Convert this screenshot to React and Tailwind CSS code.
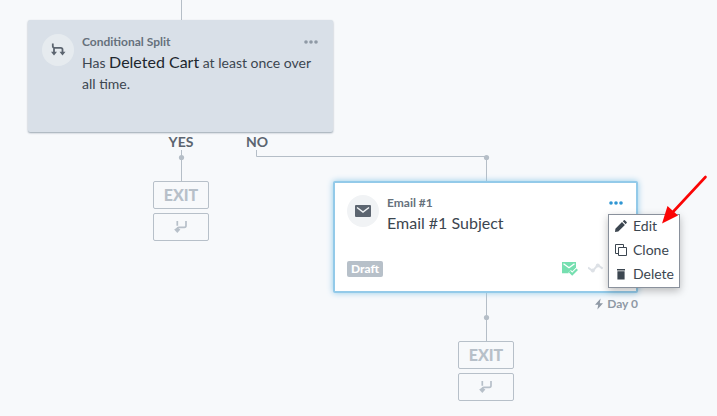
import { clsx } from 'clsx';

// Arrows used by the split card and the exit buttons
function SplitIcon() {
  return (
    <svg className="h-4 w-4" viewBox="0 0 16 16" fill="none" stroke="currentColor" strokeWidth="1.8">
      <path d="M2.8 1.5V4.2Q2.8 5.8 4.5 5.8H10.8Q12.5 5.8 12.5 7.5V12M4 5.8V12" />
      <path d="M1 9.8H7L4 13.6ZM9.5 9.8H15.5L12.5 13.6Z" fill="currentColor" stroke="none" />
    </svg>
  );
}

function MergeIcon() {
  return (
    <svg className="h-4 w-4" viewBox="0 0 16 16" fill="none" stroke="currentColor" strokeWidth="1.7">
      <path d="M4.3 2V6.8M13 2V6.5Q13 8.3 11.4 8.3H6Q4.3 8.3 4.3 10V12" />
      <path d="M1.2 10.6L4.3 8.6L7.4 10.6L4.3 14Z" fill="currentColor" stroke="none" />
    </svg>
  );
}

function MailIcon() {
  return (
    <svg className="h-3 w-4" viewBox="0 0 16 12">
      <rect width="16" height="12" rx="1" fill="#5c6570" />
      <path d="M2 2.5L8 7L14 2.5" fill="none" stroke="#f1f3f5" strokeWidth="1.5" />
    </svg>
  );
}

function MailCheckIcon() {
  return (
    <svg className="h-4 w-4" viewBox="0 0 16 16">
      <path d="M0 1H14V9.2L10 12.3H0Z" fill="#76dfb0" />
      <path d="M1.5 2.8L7 6.8L12.5 2.8" fill="none" stroke="#fff" strokeWidth="1.3" />
      <path d="M7.5 10.5L10.2 13.2L15.2 8.2" fill="none" stroke="#fff" strokeWidth="4" />
      <path d="M7.5 10.5L10.2 13.2L15.2 8.2" fill="none" stroke="#76dfb0" strokeWidth="2.2" />
    </svg>
  );
}

function TrendIcon() {
  return (
    <svg className="h-4 w-4" viewBox="0 0 16 16" fill="#dde1e6">
      <path d="M0 6.5L4.8 10L9.8 4L14.6 7.6" fill="none" stroke="#dde1e6" strokeWidth="2" />
      <circle cx="4.8" cy="9.6" r="2" />
      <circle cx="9.8" cy="4.4" r="2" />
    </svg>
  );
}

function BoltIcon() {
  return (
    <svg className="h-3 w-2" viewBox="0 0 8 12" fill="currentColor">
      <path d="M5.6 .5L0 6.8H3.2L2.4 11.5L8 5.2H4.8Z" />
    </svg>
  );
}

function PencilIcon() {
  return (
    <svg className="h-3 w-3" viewBox="0 0 12 12" fill="currentColor">
      <path d="M0 12L.4 8.7L7 2.1L9.9 5L3.3 11.6ZM7.8 1.3L8.9 .3Q9.5 -.2 10.1 .4L11.6 1.9Q12.2 2.5 11.6 3.1L10.7 4.2Z" />
    </svg>
  );
}

function CloneIcon() {
  return (
    <svg className="h-3 w-3" viewBox="0 0 12 12" fill="none" stroke="currentColor">
      <path d="M3.5 3.5H11.5V11.5H3.5Z" />
      <path d="M8.5 3V.5H.5V9.5H3" />
    </svg>
  );
}

function TrashIcon() {
  return (
    <svg className="h-3 w-3" viewBox="0 0 12 12" fill="currentColor">
      <path d="M2 1H10V2.4H2ZM2.4 3.2H9.6V11.5H2.4Z" />
    </svg>
  );
}

function MoreButton({ className }) {
  return (
    <button aria-label="More options" className={clsx('flex h-4 w-4 shrink-0 items-center', className)}>
      <svg className="h-1 w-4" viewBox="0 0 16 4" fill="currentColor">
        <circle cx="3" cy="2" r="1.8" />
        <circle cx="8" cy="2" r="1.8" />
        <circle cx="13" cy="2" r="1.8" />
      </svg>
    </button>
  );
}

function ExitNode({ className }) {
  return (
    <div className={clsx('absolute flex w-14 flex-col gap-1 text-[#b7c0c9]', className)}>
      <button className="h-7 rounded-xs border border-[#b7c0c9] text-base leading-4 font-black">EXIT</button>
      <button
        aria-label="Merge path"
        className="flex h-7 items-center justify-center rounded-xs border border-[#b7c0c9]"
      >
        <MergeIcon />
      </button>
    </div>
  );
}

const menuItems = [
  { label: 'Edit', Icon: PencilIcon },
  { label: 'Clone', Icon: CloneIcon },
  { label: 'Delete', Icon: TrashIcon },
];

function App() {
  return (
    <main className="relative min-h-screen w-full overflow-hidden bg-[#f7f9fb] font-['Lato',sans-serif] text-[#3c4650]">
      {/* Connectors */}
      <svg className="absolute top-0 left-0 h-[416px] w-[717px]" fill="none" stroke="#b5bec7">
        <path d="M181.5 0V20M181.5 150V181M256.5 150V156.5H486.5V181M486.5 292V341" />
        <g fill="#b5bec7" stroke="none">
          <circle cx="181.5" cy="157.5" r="2.6" />
          <circle cx="486.5" cy="157.5" r="2.6" />
          <circle cx="486.5" cy="317.5" r="2.6" />
        </g>
      </svg>

      {/* Conditional split */}
      <section className="absolute top-5 left-7 flex min-h-28 w-[305px] gap-2 rounded-xs bg-[#d9e0e8] p-3.5 shadow-[0_1px_2px_#98a4b0]">
        <div className="flex h-8 w-8 shrink-0 items-center justify-center rounded-full bg-[#e6ebef] text-[#5c6570]">
          <SplitIcon />
        </div>
        <div className="flex-1">
          <div className="flex items-center justify-between">
            <h2 className="text-xs leading-4 font-bold text-[#66717c]">Conditional Split</h2>
            <MoreButton className="text-[#8f99a5]" />
          </div>
          <p className="mt-0.5 text-sm leading-[21px] whitespace-nowrap">
            Has <span className="text-base leading-5 text-[#20262d]">Deleted Cart</span> at least once over
            <br />
            all time.
          </p>
        </div>
      </section>

      <span className="absolute top-[134px] left-[161px] w-10 text-center text-sm leading-4 font-bold text-[#5c6570]">
        YES
      </span>
      <span className="absolute top-[134px] left-[237px] w-10 text-center text-sm leading-4 font-bold text-[#5c6570]">
        NO
      </span>

      <ExitNode className="top-[181px] left-[153px]" />

      {/* Email */}
      <section className="absolute top-[181px] left-[333px] w-[305px]">
        <div className="relative flex min-h-28 flex-col justify-between rounded-xs border-2 border-[#93cae9] bg-white p-3 shadow-[0_0_6px_#93cae9]">
          <div className="flex gap-2">
            <div className="flex h-8 w-8 shrink-0 items-center justify-center rounded-full bg-[#f1f3f5]">
              <MailIcon />
            </div>
            <div className="flex-1">
              <div className="flex items-center justify-between">
                <h2 className="text-xs leading-4 font-bold text-[#66717c]">Email #1</h2>
                <MoreButton className="text-[#2f96d3]" />
              </div>
              <p className="mt-0.5 text-base leading-5">Email #1 Subject</p>
            </div>
          </div>
          <div className="mb-0.5 flex items-center justify-between">
            <span className="rounded-xs bg-[#b7c0c9] px-1 text-xs leading-4 font-black text-white">Draft</span>
            <div className="mr-5 flex gap-2.5">
              <MailCheckIcon />
              <TrendIcon />
            </div>
          </div>

          <ul className="absolute top-[31px] left-[273px] border border-[#8a919c] bg-white shadow-[0_3px_8px_#00000040]">
            {menuItems.map(({ label, Icon }) => (
              <li key={label}>
                <button className="flex h-6 w-full items-center gap-1.5 pr-[5px] pb-0.5 pl-1.5 text-sm leading-4">
                  <Icon />
                  {label}
                </button>
              </li>
            ))}
          </ul>
        </div>
        <p className="mt-0.5 flex items-center justify-end gap-1 text-xs leading-[18px] font-bold text-[#8f99a5]">
          <BoltIcon />
          Day 0
        </p>
      </section>

      <ExitNode className="top-[341px] left-[458px]" />

      {/* Arrow pointing at the Edit action */}
      <svg className="absolute top-[172px] left-[658px] h-14 w-[52px]" viewBox="0 0 52 56" fill="#fb0505">
        <path d="M47.5 5L14 41" stroke="#fb0505" strokeWidth="2.6" strokeLinecap="round" />
        <path d="M4 51.5L9.5 34L20 43.5Z" />
      </svg>
    </main>
  );
}

export default App;
